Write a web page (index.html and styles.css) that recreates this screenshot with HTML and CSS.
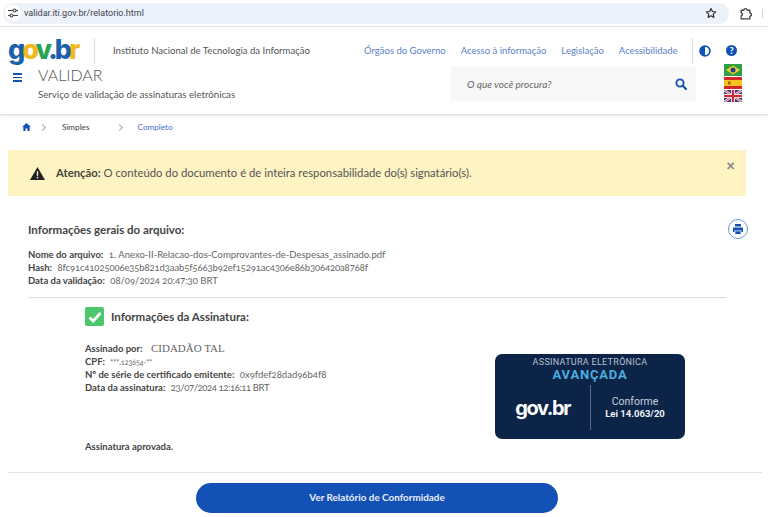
FILE: index.html
```html
<!DOCTYPE html>
<html lang="pt-BR">
<head>
<meta charset="UTF-8">
<title>Validar</title>
<link rel="stylesheet" href="styles.css">
</head>
<body>
<div class="chrome">
	<div class="address">
		<span class="tune">
			<svg width="12" height="12" viewBox="0 0 12 12"><path d="M1 3.5h5M9 3.5h2M1 8.5h2M6 8.5h5" stroke="#444" stroke-width="1.2" fill="none"/><circle cx="7.5" cy="3.5" r="1.5" fill="none" stroke="#444" stroke-width="1.1"/><circle cx="4.5" cy="8.5" r="1.5" fill="none" stroke="#444" stroke-width="1.1"/></svg>
		</span>
		<span class="url">validar.iti.gov.br/relatorio.html</span>
		<svg class="star" width="12" height="12" viewBox="0 0 24 24"><path d="M12 3l2.8 6 6.5.8-4.8 4.4 1.3 6.5L12 17.500l-5.800 3.200 1.300-6.500L2.700 9.800 9.200 9z" fill="none" stroke="#333" stroke-width="2.400" stroke-linejoin="round"/></svg>
	</div>
	<svg class="puzzle" width="13" height="13" viewBox="0 0 24 24"><path d="M4 6h5a3 3 0 0 1 6 0h5v5a3 3 0 0 1 0 6v5H4v-6a2.500 2.500 0 0 0 0-5z" fill="none" stroke="#444" stroke-width="2.400" stroke-linejoin="round"/></svg>
	<span class="chrome-sep"></span>
</div>

<header class="site-header">
	<div class="top-row">
		<div class="logo"><span class="c-blue">g</span><span class="c-yellow">o</span><span class="c-green">v</span><span class="c-blue">.b</span><span class="c-yellow">r</span></div>
		<span class="vsep"></span>
		<span class="institute">Instituto Nacional de Tecnologia da Informação</span>
		<nav class="links">
			<a>Órgãos do Governo</a>
			<a>Acesso à informação</a>
			<a>Legislação</a>
			<a>Acessibilidade</a>
		</nav>
		<span class="vsep vsep-right"></span>
		<svg class="tool" width="12" height="12" viewBox="0 0 12 12"><circle cx="6" cy="6" r="4.900" fill="none" stroke="#1351b4" stroke-width="1.800"/><path d="M6 1a5 5 0 0 0 0 10z" fill="#1351b4"/></svg>
		<span class="help">?</span>
	</div>
	<div class="second-row">
		<div class="burger"><span></span><span></span><span></span></div>
		<div class="titles">
			<div class="app-name">VALIDAR</div>
			<div class="app-sub">Serviço de validação de assinaturas eletrônicas</div>
		</div>
		<div class="search">
			<span>O que você procura?</span>
			<svg width="12" height="12" viewBox="0 0 12 12"><circle cx="5" cy="5" r="3.600" fill="none" stroke="#1351b4" stroke-width="1.900"/><path d="M7.800 7.800L11 11" stroke="#1351b4" stroke-width="2.200" stroke-linecap="round"/></svg>
		</div>
		<div class="flags">
			<svg width="18" height="12" viewBox="0 0 18 12"><rect width="18" height="12" fill="#2f9e44"/><path d="M9 1.500L16 6 9 10.500 2 6z" fill="#f2d024"/><circle cx="9" cy="6" r="2.500" fill="#1b3f8b"/></svg>
			<svg width="18" height="12" viewBox="0 0 18 12"><rect width="18" height="12" fill="#d4272a"/><rect y="3" width="18" height="6" fill="#f6c31c"/><rect x="4" y="4.500" width="2.500" height="3" fill="#b5502a"/></svg>
			<svg width="18" height="12" viewBox="0 0 18 12"><rect width="18" height="12" fill="#2f3f86"/><path d="M0 0l18 12M18 0L0 12" stroke="#f3dfe2" stroke-width="2.400"/><path d="M0 0l18 12M18 0L0 12" stroke="#cf2b3a" stroke-width=".8"/><path d="M9 0v12M0 6h18" stroke="#f3dfe2" stroke-width="4"/><path d="M9 0v12M0 6h18" stroke="#cf2b3a" stroke-width="2.200"/></svg>
		</div>
	</div>
</header>

<div class="crumbs">
	<svg class="home" width="9" height="8" viewBox="0 0 12 11"><path d="M6 0L0 5.500h1.700V11h3V7.500h2.600V11h3V5.500H12z" fill="#1351b4"/></svg>
	<span class="chev"></span>
	<span class="crumb">Simples</span>
	<span class="chev chev-wide"></span>
	<span class="crumb crumb-on">Completo</span>
</div>

<div class="alert">
	<svg width="15" height="13" viewBox="0 0 15 13"><path d="M7.500 0L15 13H0z" fill="#222"/><rect x="6.800" y="4.200" width="1.400" height="4.600" fill="#fef3c2"/><rect x="6.800" y="9.800" width="1.400" height="1.500" fill="#fef3c2"/></svg>
	<p><b>Atenção:</b> O conteúdo do documento é de inteira responsabilidade do(s) signatário(s).</p>
	<span class="close">×</span>
</div>

<section class="general">
	<div class="general-head">
		<h2>Informações gerais do arquivo:</h2>
		<span class="print">
			<svg width="12" height="12" viewBox="0 0 12 12"><path d="M3 1h6v2.500H3zM1 4.500h10V9H9.500V7.500h-7V9H1zM3.300 8.300h5.400V11H3.300z" fill="#1351b4"/></svg>
		</span>
	</div>
	<div class="meta">
		<div><b>Nome do arquivo:</b> <span>1. Anexo-II-Relacao-dos-Comprovantes-de-Despesas_assinado.pdf</span></div>
		<div><b>Hash:</b> <span class="num">8fc91c41025006e35b821d3aab5f5663b92ef15291ac4306e86b306420a8768f</span></div>
		<div><b>Data da validação:</b> <span>08/09/2024 20:47:30 BRT</span></div>
	</div>
</section>

<hr class="rule rule-inner">

<section class="signature">
	<div class="sig-info">
		<div class="sig-head">
			<span class="check"><svg width="14" height="12" viewBox="0 0 14 12"><path d="M1.500 6.500L5.200 10 12.500 2" fill="none" stroke="#fff" stroke-width="2.800"/></svg></span>
			<h3>Informações da Assinatura:</h3>
		</div>
		<div class="meta">
			<div class="signer"><b>Assinado por:</b> <em>CIDADÃO TAL</em></div>
			<div><b>CPF:</b> <span class="tiny">***.123654-**</span></div>
			<div><b>Nº de série de certificado emitente:</b> <span>0x9fdef28dad96b4f8</span></div>
			<div><b>Data da assinatura:</b> <span class="num-tight">23/07/2024 12:16:11 BRT</span></div>
		</div>
		<p class="approved">Assinatura aprovada.</p>
	</div>
	<div class="seal">
		<div class="seal-title">ASSINATURA ELETRÔNICA</div>
		<div class="seal-level">AVANÇADA</div>
		<div class="seal-bottom">
			<span class="seal-logo">gov.br</span>
			<span class="seal-sep"></span>
			<div class="seal-law">Conforme<br><b>Lei 14.063/20</b></div>
		</div>
	</div>
</section>

<hr class="rule rule-outer">

<div class="actions">
	<a class="btn-report">Ver Relatório de Conformidade</a>
</div>
</body>
</html>
```

FILE: styles.css
```css
*{
	box-sizing: border-box;
}
html,body{
	margin: 0;
	padding: 0;
}
body{
	height: 517px;
	overflow: hidden;
	background: #fff;
	color: #444;
	font-family: "Lato", "Open Sans", sans-serif;
	font-size: 9.5px;
}
h2,h3,p{
	margin: 0;
}

/* browser bar */
.chrome{
	display: flex;
	align-items: center;
	height: 27px;
	padding: 2px 0 2px 3px;
	border-bottom: 1px solid #eee;
}
.address{
	display: flex;
	align-items: center;
	width: 726px;
	height: 21px;
	padding: 0 12px 0 2px;
	background: #edf1fa;
	border-radius: 11px;
}
.tune{
	display: flex;
	align-items: center;
	justify-content: center;
	width: 16px;
	height: 16px;
	background: #fff;
	border-radius: 50%;
}
.url{
	margin-left: 3px;
	color: #3c4450;
	font-family: "Roboto", sans-serif;
	font-size: 9px;
}
.star{
	margin-left: auto;
}
.puzzle{
	margin-left: 10px;
}
.chrome-sep{
	width: 1px;
	height: 9px;
	margin-left: 10px;
	background: #c8d6ee;
}

/* header */
.site-header{
	height: 87px;
	padding: 10px 0 0 8px;
	box-shadow: 0 1px 3px rgba(0,0,0,.18);
}
.top-row{
	display: flex;
	align-items: center;
	height: 27px;
	white-space: nowrap;
}
.logo{
	flex: none;
	width: 71px;
	margin-top: -2px;
	font-family: "Inter", sans-serif;
	font-size: 27px;
	font-weight: 800;
	letter-spacing: -3px;
	line-height: 27px;
}
.c-blue{
	color: #1b60ab;
}
.c-yellow{
	color: #f2b71c;
}
.c-green{
	color: #2aa353;
}
.vsep{
	flex: none;
	width: 1px;
	height: 26px;
	margin-left: 15px;
	background: #ddd;
}
.institute{
	flex: none;
	width: 197px;
	margin-left: 18px;
	color: #555;
	font-size: 9.600px;
}
.links{
	display: flex;
	flex: none;
	gap: 15px;
	width: 315px;
	margin-left: 54px;
	color: #5a82c8;
	font-size: 9.500px;
}
.vsep-right{
	margin-left: 13px;
}
.tool{
	flex: none;
	margin-left: 6px;
}
.help{
	display: flex;
	flex: none;
	align-items: center;
	justify-content: center;
	width: 11px;
	height: 11px;
	margin-left: 15px;
	background: #1351b4;
	border-radius: 50%;
	color: #fff;
	font-size: 9px;
	font-weight: 900;
}
.second-row{
	display: flex;
	align-items: flex-start;
}
.burger{
	display: flex;
	flex-direction: column;
	gap: 2px;
	width: 9px;
	margin: 9px 0 0 5px;
}
.burger span{
	height: 1.500px;
	background: #1351b4;
}
.titles{
	width: 413px;
	margin-left: 16px;
	padding-top: 1px;
}
.app-name{
	color: #555;
	font-size: 16px;
	font-weight: 300;
	line-height: 20px;
}
.app-sub{
	margin-top: 2px;
	color: #555;
	font-size: 9.700px;
	line-height: 14px;
}
.search{
	display: flex;
	align-items: center;
	justify-content: space-between;
	width: 245px;
	height: 35px;
	margin-top: 2px;
	padding: 0 9px 0 16px;
	background: #f8f8f8;
	color: #666;
	font-size: 10px;
	font-style: italic;
}
.flags{
	display: flex;
	flex-direction: column;
	gap: 1px;
	margin-left: 28px;
}
.flags svg{
	display: block;
}

/* breadcrumb */
.crumbs{
	display: flex;
	align-items: center;
	height: 27px;
	padding: 0 0 1px 22px;
	font-size: 8.200px;
}
.chev{
	width: 5px;
	height: 5px;
	margin: 0 17px 0 9px;
	border-top: 1px solid #aaa;
	border-right: 1px solid #aaa;
	transform: rotate(45deg);
}
.chev-wide{
	margin: 0 16px 0 27px;
}
.crumb-on{
	color: #4a6fd0;
}

/* alert */
.alert{
	display: flex;
	align-items: center;
	width: 738px;
	height: 46px;
	margin: 9px 0 0 8px;
	padding-left: 22px;
	background: #fef3c2;
	color: #555;
	font-size: 11.300px;
	position: relative;
}
.alert p{
	margin-left: 11px;
	padding-bottom: 2px;
}
.alert b{
	color: #444;
}
.close{
	position: absolute;
	top: 6px;
	right: 11px;
	color: #888;
	font-size: 15px;
	font-weight: 900;
	line-height: 18px;
}

/* file info */
.general{
	padding: 26px 26px 0 28px;
}
.general-head{
	display: flex;
	align-items: center;
	justify-content: space-between;
	height: 14px;
}
h2{
	color: #444;
	font-size: 11.500px;
	font-weight: 700;
}
.print{
	display: flex;
	align-items: center;
	justify-content: center;
	width: 20px;
	height: 20px;
	margin-right: -6px;
	border: 1px solid #6f95d6;
	border-radius: 50%;
}
.meta{
	color: #666;
	font-size: 9.500px;
	font-variant-numeric: oldstyle-nums;
	line-height: 13px;
}
.general .meta{
	margin-top: 12px;
}
.meta b{
	margin-right: 3px;
	color: #444;
}
.num{
	letter-spacing: -.12px;
}
.num-tight{
	letter-spacing: -.4px;
}
.rule{
	height: 1px;
	margin: 0;
	border: 0;
	background: #ddd;
}
.rule-inner{
	width: 698px;
	margin: 10px 0 0 28px;
}

/* signature */
.signature{
	display: flex;
	height: 174px;
	padding: 9px 0 0 85px;
}
.sig-info{
	width: 410px;
}
.sig-head{
	display: flex;
	align-items: center;
	gap: 7px;
}
.check{
	display: flex;
	align-items: center;
	justify-content: center;
	width: 19px;
	height: 19px;
	background: #4bc76e;
	border-radius: 2px;
}
h3{
	color: #444;
	font-size: 11.500px;
	font-weight: 700;
}
.sig-info .meta{
	margin-top: 16px;
}
.signer em{
	margin-left: 3px;
	color: #666;
	font-family: "Liberation Serif", serif;
	font-size: 11px;
	font-style: normal;
	line-height: 1;
}
.tiny{
	font-size: 7px;
	line-height: 1;
}
.approved{
	margin-top: 47px;
	color: #444;
	font-size: 9.500px;
	font-weight: 700;
}
.seal{
	display: flex;
	flex-direction: column;
	align-items: center;
	width: 190px;
	height: 85px;
	margin-top: 47px;
	padding-top: 3px;
	background: #0c2448;
	border-radius: 7px;
	color: #fff;
	font-family: "Roboto", sans-serif;
}
.seal-title{
	color: #b9c2d0;
	font-size: 9px;
	letter-spacing: .3px;
	line-height: 10px;
}
.seal-level{
	margin-top: 3px;
	color: #4aaede;
	font-size: 13px;
	font-weight: 700;
	letter-spacing: .8px;
	line-height: 10px;
}
.seal-bottom{
	display: flex;
	align-items: center;
	margin-top: 5px;
}
.seal-logo{
	width: 61px;
	font-family: "Inter", sans-serif;
	font-size: 20px;
	font-weight: 700;
	letter-spacing: -1.400px;
}
.seal-sep{
	width: 1px;
	height: 45px;
	margin: 0 14px 0 14px;
	background: #5a6b85;
}
.seal-law{
	color: #c8d0dc;
	font-size: 10.500px;
	line-height: 12px;
	text-align: center;
}
.seal-law b{
	color: #eef1f5;
	font-size: 9.500px;
	font-weight: 700;
}
.rule-outer{
	width: 754px;
	margin-left: 8px;
	background: #e4e4e4;
}
.actions{
	margin: 10px 0 0 196px;
}
.btn-report{
	display: flex;
	align-items: center;
	justify-content: center;
	width: 362px;
	height: 30px;
	padding-bottom: 2px;
	background: #1351b4;
	border-radius: 15px;
	color: #e8eefa;
	font-size: 9.900px;
	font-weight: 700;
}
```
